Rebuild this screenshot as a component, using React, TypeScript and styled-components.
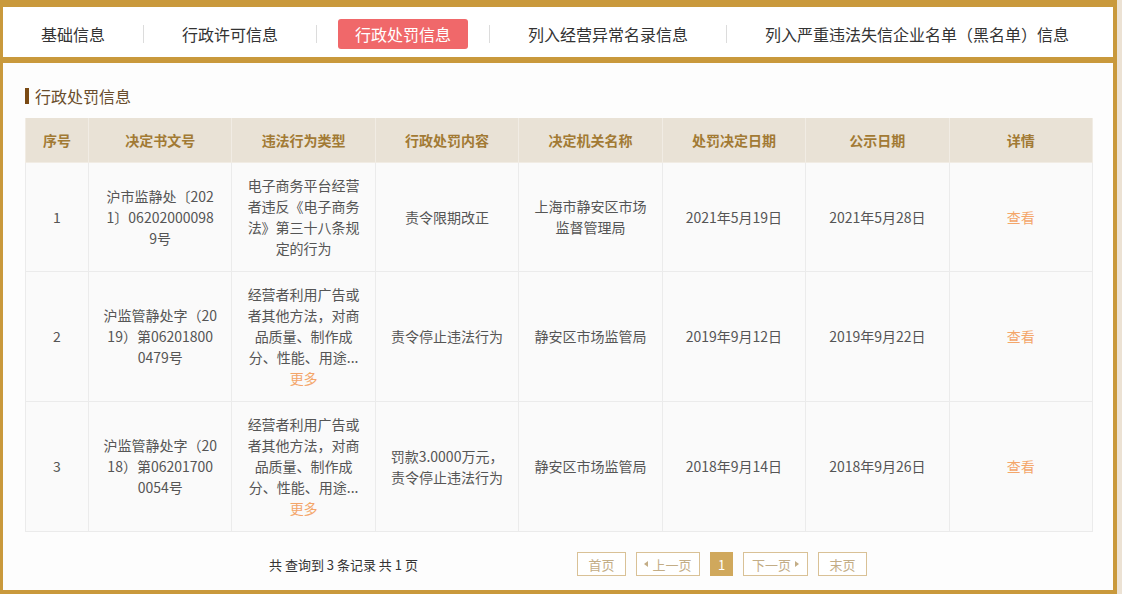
import React from 'react';
import styled, { createGlobalStyle } from 'styled-components';

const GlobalStyle = createGlobalStyle`
  html, body {
    margin: 0;
    padding: 0;
    background: #ece2d4;
  }
  body {
    font-family: "Noto Sans CJK SC", "Noto Sans", sans-serif;
    color: #333;
  }
`;

const gold = '#c9993c';

const Frame = styled.div`
  width: 1110px;
  height: 583px;
  border-style: solid;
  border-color: ${gold};
  border-width: 7px 4px 4px 3px;
  display: flex;
  flex-direction: column;
  background: #fdfdfd;
`;

const TabBar = styled.nav`
  height: 46px;
  flex: none;
  background: #fff;
  border-bottom: 6px solid ${gold};
  display: flex;
  align-items: center;
  padding: 4px 0 0 21px;
`;

const Tab = styled.div<{ $active?: boolean }>`
  height: 30px;
  line-height: 30px;
  padding: 0 17px;
  font-size: 16px;
  border-radius: 3px;
  white-space: nowrap;
  cursor: pointer;
  color: ${(p) => (p.$active ? '#fff' : '#333')};
  background: ${(p) => (p.$active ? '#f0686a' : 'transparent')};
`;

const TabDivider = styled.span`
  width: 1px;
  height: 18px;
  margin: 0 21px;
  background: #dcdcdc;
`;

const Content = styled.section`
  flex: 1;
  padding: 23px 20px 0 22px;
`;

const Title = styled.h3`
  margin: 0 0 12px;
  height: 20px;
  display: flex;
  align-items: center;
  font-size: 16px;
  font-weight: normal;
  line-height: 20px;
  color: #6a4d2c;
  &::before {
    content: '';
    width: 4px;
    height: 16px;
    margin-right: 6px;
    background: #7a4a14;
  }
`;

const Table = styled.table`
  width: 1068px;
  table-layout: fixed;
  border-collapse: collapse;
  font-size: 14px;
`;

const HeadCell = styled.th`
  height: 44px;
  padding: 0;
  background: #e9e2d6;
  color: #a27a34;
  font-weight: bold;
  text-align: center;
  border: 1px solid #f1ece4;
  border-top: none;
`;

const Cell = styled.td`
  padding: 12px 0;
  line-height: 21px;
  text-align: center;
  vertical-align: middle;
  color: #555;
  background: #fafafa;
  border: 1px solid #ebebeb;
  white-space: pre-line;
`;

const Link = styled.a`
  color: #f4a66a;
  cursor: pointer;
  text-decoration: none;
`;

const MoreLink = styled(Link)`
  display: block;
`;

const Footer = styled.div`
  margin-top: 20px;
  height: 24px;
  display: flex;
  align-items: center;
  padding-left: 244px;
`;

const Summary = styled.span`
  width: 143px;
  margin-right: 165px;
  font-size: 13px;
  color: #333;
  white-space: nowrap;
`;

const Pager = styled.div`
  display: flex;
  gap: 10px;
`;

const PageButton = styled.button<{ $active?: boolean; $w: number }>`
  width: ${(p) => p.$w}px;
  height: 24px;
  padding: 0;
  display: flex;
  align-items: center;
  justify-content: center;
  gap: 4px;
  font-family: inherit;
  font-size: 13px;
  cursor: pointer;
  border: 1px solid ${(p) => (p.$active ? '#d0a85c' : '#d9c196')};
  background: ${(p) => (p.$active ? '#d0a85c' : '#fff')};
  color: ${(p) => (p.$active ? '#fff' : '#c3ad86')};
`;

const Caret = styled.span<{ $dir: 'left' | 'right' }>`
  width: 0;
  height: 0;
  border-top: 3px solid transparent;
  border-bottom: 3px solid transparent;
  ${(p) =>
    p.$dir === 'left'
      ? 'border-right: 4px solid #c3ad86;'
      : 'border-left: 4px solid #c3ad86;'}
`;

type Penalty = {
  no: number;
  doc: string;
  type: string;
  more: boolean;
  content: string;
  org: string;
  decided: string;
  published: string;
};

const tabs = [
  '基础信息',
  '行政许可信息',
  '行政处罚信息',
  '列入经营异常名录信息',
  '列入严重违法失信企业名单（黑名单）信息',
];

const columns = ['序号', '决定书文号', '违法行为类型', '行政处罚内容', '决定机关名称', '处罚决定日期', '公示日期', '详情'];

const rows: Penalty[] = [
  {
    no: 1,
    doc: '沪市监静处〔202\n1〕06202000098\n9号',
    type: '电子商务平台经营\n者违反《电子商务\n法》第三十八条规\n定的行为',
    more: false,
    content: '责令限期改正',
    org: '上海市静安区市场\n监督管理局',
    decided: '2021年5月19日',
    published: '2021年5月28日',
  },
  {
    no: 2,
    doc: '沪监管静处字（20\n19）第06201800\n0479号',
    type: '经营者利用广告或\n者其他方法，对商\n品质量、制作成\n分、性能、用途...',
    more: true,
    content: '责令停止违法行为',
    org: '静安区市场监管局',
    decided: '2019年9月12日',
    published: '2019年9月22日',
  },
  {
    no: 3,
    doc: '沪监管静处字（20\n18）第06201700\n0054号',
    type: '经营者利用广告或\n者其他方法，对商\n品质量、制作成\n分、性能、用途...',
    more: true,
    content: '罚款3.0000万元，\n责令停止违法行为',
    org: '静安区市场监管局',
    decided: '2018年9月14日',
    published: '2018年9月26日',
  },
];

export default function App() {
  return (
    <>
      <GlobalStyle />
      <Frame>
        <TabBar>
          {tabs.map((t, i) => (
            <React.Fragment key={t}>
              {i > 0 && <TabDivider />}
              <Tab $active={i === 2}>{t}</Tab>
            </React.Fragment>
          ))}
        </TabBar>
        <Content>
          <Title>行政处罚信息</Title>
          <Table>
            <colgroup>
              <col style={{ width: 63 }} />
              {columns.slice(1).map((c) => (
                <col key={c} />
              ))}
            </colgroup>
            <thead>
              <tr>
                {columns.map((c) => (
                  <HeadCell key={c}>{c}</HeadCell>
                ))}
              </tr>
            </thead>
            <tbody>
              {rows.map((r) => (
                <tr key={r.no}>
                  <Cell>{r.no}</Cell>
                  <Cell>{r.doc}</Cell>
                  <Cell>
                    {r.type}
                    {r.more && <MoreLink>更多</MoreLink>}
                  </Cell>
                  <Cell>{r.content}</Cell>
                  <Cell>{r.org}</Cell>
                  <Cell>{r.decided}</Cell>
                  <Cell>{r.published}</Cell>
                  <Cell>
                    <Link>查看</Link>
                  </Cell>
                </tr>
              ))}
            </tbody>
          </Table>
          <Footer>
            <Summary>共 查询到 3 条记录 共 1 页</Summary>
            <Pager>
              <PageButton $w={49}>首页</PageButton>
              <PageButton $w={64}>
                <Caret $dir="left" />
                上一页
              </PageButton>
              <PageButton $w={23} $active>
                1
              </PageButton>
              <PageButton $w={65}>
                下一页
                <Caret $dir="right" />
              </PageButton>
              <PageButton $w={49}>末页</PageButton>
            </Pager>
          </Footer>
        </Content>
      </Frame>
    </>
  );
}
